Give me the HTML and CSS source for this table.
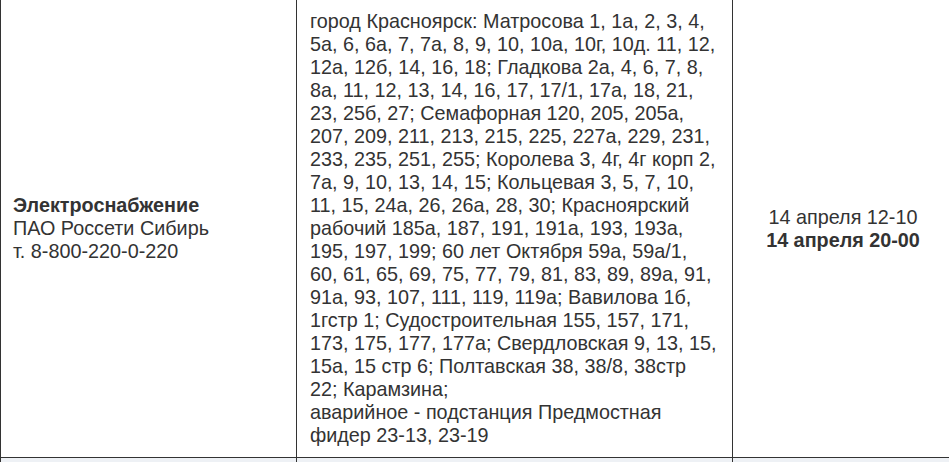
FILE: index.html
```html
<!DOCTYPE html>
<html lang="ru">
<head>
<meta charset="utf-8">
<title>Отключения</title>
<link rel="stylesheet" href="styles.css">
</head>
<body>
<table class="outages">
  <colgroup>
    <col class="col-service">
    <col class="col-addr">
    <col class="col-time">
  </colgroup>
  <tbody>
    <tr class="row">
      <td class="cell cell-service">
        <b>Электроснабжение</b><br>
        ПАО Россети Сибирь<br>
        т. 8-800-220-0-220
      </td>
      <td class="cell cell-addr">
        город Красноярск: Матросова 1, 1а, 2, 3, 4, 5а, 6, 6а, 7, 7а, 8, 9, 10, 10а, 10г, 10д. 11, 12, 12а, 12б, 14, 16, 18; Гладкова 2а, 4, 6, 7, 8, 8а, 11, 12, 13, 14, 16, 17, 17/1, 17а, 18, 21, 23, 25б, 27; Семафорная 120, 205, 205а, 207, 209, 211, 213, 215, 225, 227а, 229, 231, 233, 235, 251, 255; Королева 3, 4г, 4г корп 2, 7а, 9, 10, 13, 14, 15; Кольцевая 3, 5, 7, 10, 11, 15, 24а, 26, 26а, 28, 30; Красноярский рабочий 185а, 187, 191, 191а, 193, 193а, 195, 197, 199; 60 лет Октября 59а, 59а/1, 60, 61, 65, 69, 75, 77, 79, 81, 83, 89, 89а, 91, 91а, 93, 107, 111, 119, 119а; Вавилова 1б, 1гстр 1; Судостроительная 155, 157, 171, 173, 175, 177, 177а; Свердловская 9, 13, 15, 15а, 15 стр 6; Полтавская 38, 38/8, 38стр 22; Карамзина;<br>
        аварийное - подстанция Предмостная фидер 23-13, 23-19
      </td>
      <td class="cell cell-time">
        14 апреля 12-10<br>
        <b>14 апреля 20-00</b>
      </td>
    </tr>
    <tr class="row row-alt">
      <td class="cell">&nbsp;</td>
      <td class="cell">&nbsp;</td>
      <td class="cell">&nbsp;</td>
    </tr>
  </tbody>
</table>
</body>
</html>
```

FILE: styles.css
```css
html, body {
  margin: 0;
  padding: 0;
  background: #ffffff;
  overflow: hidden;
}

.outages {
  border-collapse: collapse;
  table-layout: fixed;
  width: 953px;
  font-family: "Liberation Sans", Arial, sans-serif;
  font-size: 19.8px;
  line-height: 23px;
  color: #333333;
}

.col-service { width: 296px; }
.col-addr { width: 436px; }
.col-time { width: 221px; }

.cell {
  border: 1px solid #333333;
  border-top: none;
  padding: 10px 13px;
  vertical-align: middle;
  text-align: left;
}

.cell-service {
  padding-left: 12px;
}

.cell-addr {
  padding-right: 14.7px;
}

.cell-time {
  text-align: center;
}

.row-alt .cell {
  background: #eef1f5;
}
```
